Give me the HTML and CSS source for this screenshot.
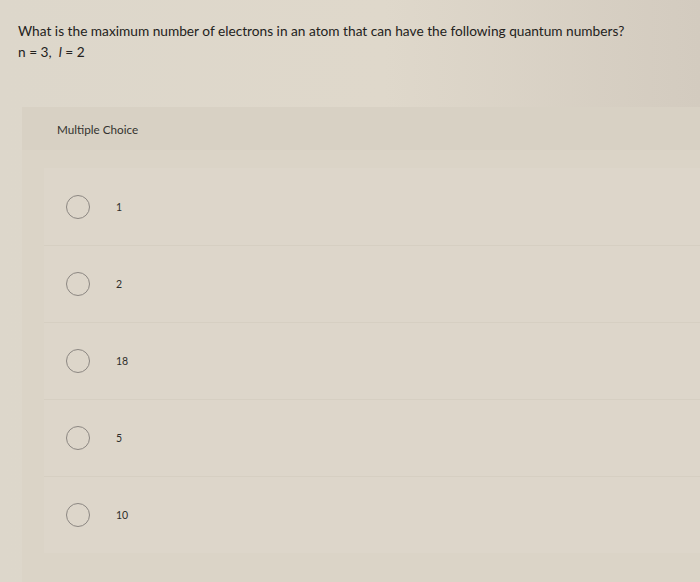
FILE: index.html
```html
<!DOCTYPE html>
<html>
<head>
<meta charset="utf-8">
<link rel="stylesheet" href="styles.css">
</head>
<body>
<div class="page">
  <div class="question">
    <p class="q-line">What is the maximum number of electrons in an atom that can have the following quantum numbers?</p>
    <p class="q-line">n = 3,&nbsp; <i class="ell">l</i> = 2</p>
  </div>
  <section class="panel">
    <div class="panel-head">Multiple Choice</div>
    <ul class="choices">
      <li class="choice"><span class="radio"></span><span class="label">1</span></li>
      <li class="choice"><span class="radio"></span><span class="label">2</span></li>
      <li class="choice"><span class="radio"></span><span class="label">18</span></li>
      <li class="choice"><span class="radio"></span><span class="label">5</span></li>
      <li class="choice"><span class="radio"></span><span class="label">10</span></li>
    </ul>
  </section>
</div>
</body>
</html>
```

FILE: styles.css
```css
html, body {
  margin: 0;
  padding: 0;
}
body {
  width: 700px;
  height: 582px;
  overflow: hidden;
  background: linear-gradient(90deg, #ddd7cb 0%, #dfd8cb 55%, #d3cbbf 100%);
  font-family: Lato, "Open Sans", sans-serif;
  color: #232220;
}
.page {
  padding-top: 20px;
}
.question {
  padding-left: 18px;
}
.q-line {
  margin: 0;
  font-size: 13.7px;
  line-height: 21px;
}
.ell {
  font-style: italic;
}
.panel {
  margin: 45px 0 0 22px;
  background: #dbd4c7;
  height: 480px;
}
.panel-head {
  height: 43px;
  padding-left: 35px;
  display: flex;
  align-items: center;
  font-size: 11.7px;
  color: #34332f;
  background: #d8d1c4;
}
.choices {
  list-style: none;
  margin: 0;
  padding: 18px 0 0 22px;
}
.choice {
  height: 76px;
  display: flex;
  align-items: center;
  padding-left: 22px;
  background: #ddd6ca;
}
.choice:first-child {
  height: 77px;
}
.choice + .choice {
  border-top: 1px solid #d6cfc2;
}
.radio {
  width: 22px;
  height: 22px;
  border: 1.5px solid #8c8782;
  border-radius: 50%;
  flex: none;
}
.label {
  margin-left: 26px;
  font-size: 10.5px;
  color: #2f2e2b;
}
```
